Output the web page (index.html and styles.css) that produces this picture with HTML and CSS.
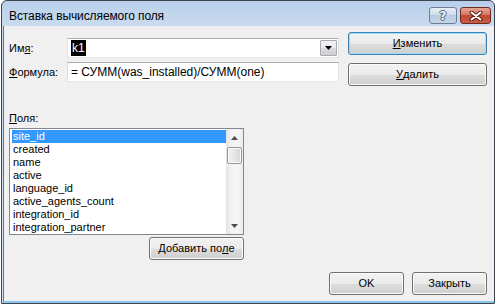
FILE: index.html
```html
<!DOCTYPE html>
<html lang="ru">
<head>
<meta charset="utf-8">
<title>Вставка вычисляемого поля</title>
<link rel="stylesheet" href="styles.css">
</head>
<body>
<div class="window">
  <div class="titlebar">
    <span class="title">Вставка вычисляемого поля</span>
    <div class="caption-btns">
      <div class="cap help"><span class="q">?</span></div>
      <div class="cap close">
        <svg width="14" height="10" viewBox="0 0 14 10">
          <path d="M2.5 1.5 L11.5 8.5 M11.5 1.5 L2.5 8.5" stroke="#5a1c12" stroke-width="4" stroke-linecap="round" fill="none"/>
          <path d="M2.5 1.5 L11.5 8.5 M11.5 1.5 L2.5 8.5" stroke="#ffffff" stroke-width="2" stroke-linecap="round" fill="none"/>
        </svg>
      </div>
    </div>
  </div>
  <div class="client">
    <div class="top">
      <div class="fields">
        <div class="row">
          <span class="lbl">Им<u>я</u>:</span>
          <div class="combo">
            <span class="combo-text"><span class="sel">k1</span></span>
            <div class="drop">
              <svg width="7" height="4" viewBox="0 0 7 4"><path d="M0 0 H7 L3.5 4 Z" fill="#000"/></svg>
            </div>
          </div>
        </div>
        <div class="row">
          <span class="lbl"><u>Ф</u>ормула:</span>
          <div class="input">= СУММ(was_installed)/СУММ(one)</div>
        </div>
      </div>
      <div class="actions">
        <div class="btn default"><u>И</u>зменить</div>
        <div class="btn"><u>У</u>далить</div>
      </div>
    </div>
    <div class="fields-label"><u>П</u>оля:</div>
    <div class="listbox">
      <ul class="items">
        <li class="item selected">site_id</li>
        <li class="item">created</li>
        <li class="item">name</li>
        <li class="item">active</li>
        <li class="item">language_id</li>
        <li class="item">active_agents_count</li>
        <li class="item">integration_id</li>
        <li class="item">integration_partner</li>
      </ul>
      <div class="scrollbar">
        <div class="sb-arrow">
          <svg width="7" height="4" viewBox="0 0 7 4"><path d="M0 4 H7 L3.5 0 Z" fill="#4d4d4d"/></svg>
        </div>
        <div class="sb-track">
          <div class="sb-thumb"></div>
        </div>
        <div class="sb-arrow">
          <svg width="7" height="4" viewBox="0 0 7 4"><path d="M0 0 H7 L3.5 4 Z" fill="#4d4d4d"/></svg>
        </div>
      </div>
    </div>
    <div class="add-row">
      <div class="btn add">Добавить по<u>л</u>е</div>
    </div>
    <div class="footer">
      <div class="btn small">OK</div>
      <div class="btn small">Закрыть</div>
    </div>
  </div>
</div>
</body>
</html>
```

FILE: styles.css
```css
* { box-sizing: border-box; }

html, body {
  margin: 0;
  padding: 0;
  background: #ffffff;
}

body {
  width: 498px;
  height: 306px;
  font-family: "Liberation Sans", Arial, sans-serif;
  font-size: 11px;
  color: #000;
}

u { text-decoration: underline; text-underline-offset: 1px; }

.window {
  margin-left: 1px;
  width: 494px;
  height: 304px;
  border: 1px solid #3c4450;
  border-radius: 6px 6px 0 0;
  background: linear-gradient(to bottom, #b8cfea 0px, #cbdcf0 26px, #dbe7f4 100%);
  padding-left: 1px;
  display: flex;
  flex-direction: column;
}

.titlebar {
  height: 25px;
  display: flex;
  align-items: flex-start;
  justify-content: space-between;
  padding: 0 3px 0 6px;
}

.title {
  font-size: 12px;
  line-height: 14px;
  margin-top: 8px;
  color: #000;
  letter-spacing: -0.1px;
}

.caption-btns {
  display: flex;
  gap: 3px;
  margin-top: 6px;
}

.cap {
  height: 17px;
  border-radius: 3px;
  display: flex;
  align-items: center;
  justify-content: center;
}

.help {
  width: 28px;
  border: 1px solid #6d7f96;
  background: linear-gradient(to bottom, #e6eef7 0%, #d2deeb 45%, #b9cbdf 50%, #c6d6e8 100%);
}

.q {
  font-family: "DejaVu Sans", sans-serif;
  font-weight: bold;
  font-size: 12px;
  line-height: 12px;
  color: #f4f7fb;
  text-shadow: 1px 0 0 #4f5f73, -1px 0 0 #4f5f73, 0 1px 0 #4f5f73, 0 -1px 0 #4f5f73;
}

.close {
  width: 31px;
  border: 1px solid #6e2a1f;
  background: linear-gradient(to bottom, #e6a595 0%, #d67763 45%, #c24a34 50%, #c95c42 100%);
}

.client {
  flex: 1;
  background: #f0f0f0;
  border-left: 1px solid #6f6f6f;
  border-bottom: 2px solid #8cc5ec;
  padding: 6px 7px 0 5px;
  display: flex;
  flex-direction: column;
}

.top {
  display: flex;
  gap: 9px;
}

.fields {
  width: 330px;
  margin-top: 6px;
  display: flex;
  flex-direction: column;
  gap: 4px;
}

.row {
  display: flex;
  align-items: center;
  height: 20px;
}

.lbl {
  width: 58px;
  line-height: 13px;
}

.combo, .input {
  width: 272px;
  height: 20px;
  background: #fff;
  border: 1px solid #abadb3;
  border-left-color: #dbdfe6;
  border-right-color: #dbdfe6;
  border-bottom-color: #e3e9ef;
}

.combo {
  display: flex;
  align-items: stretch;
  justify-content: space-between;
  padding: 1px;
}

.combo-text {
  display: flex;
  align-items: center;
  padding-left: 2px;
}

.sel {
  background: #000;
  color: #fff;
  line-height: 16px;
  font-size: 12px;
  padding: 0 1px;
}

.drop {
  width: 17px;
  border: 1px solid #a8abb3;
  border-radius: 1px;
  background: linear-gradient(to bottom, #f2f2f2 0%, #ebebeb 50%, #dddddd 51%, #cfcfcf 100%);
  display: flex;
  align-items: center;
  justify-content: center;
}

.input {
  padding-left: 3px;
  line-height: 18px;
  font-size: 12px;
  white-space: nowrap;
}

.actions {
  width: 139px;
  display: flex;
  flex-direction: column;
  gap: 8px;
}

.btn {
  height: 23px;
  border: 1px solid #707070;
  border-radius: 3px;
  background: linear-gradient(to bottom, #f2f2f2 0%, #ebebeb 50%, #dddddd 51%, #cfcfcf 100%);
  box-shadow: inset 0 0 0 1px #fcfcfc;
  display: flex;
  align-items: center;
  justify-content: center;
  line-height: 13px;
  white-space: nowrap;
}

.btn.default {
  border-color: #3c7fb1;
  box-shadow: inset 0 0 0 1px #98e0f7;
}

.fields-label {
  margin-top: 26px;
  line-height: 13px;
  height: 13px;
}

.listbox {
  margin-top: 3px;
  width: 235px;
  height: 107px;
  border: 1px solid #828790;
  background: #fff;
  display: flex;
}

.items {
  list-style: none;
  margin: 0;
  padding: 1px 0 0 2px;
  flex: 1;
}

.item {
  height: 13px;
  line-height: 13px;
  padding-left: 1px;
  white-space: nowrap;
}

.item.selected {
  background: #3399ff;
  color: #fff;
}

.scrollbar {
  width: 17px;
  display: flex;
  flex-direction: column;
  background: linear-gradient(to right, #e3e3e3 0%, #f3f3f3 30%, #f5f5f5 70%, #ececec 100%);
}

.sb-arrow {
  height: 17px;
  display: flex;
  align-items: center;
  justify-content: center;
}

.sb-track {
  flex: 1;
  padding-top: 1px;
}

.sb-thumb {
  margin: 0 1px;
  height: 17px;
  border: 1px solid #979797;
  border-radius: 2px;
  background: linear-gradient(to right, #f1f1f1 0%, #e6e6e6 50%, #d6d6d6 100%);
  box-shadow: inset 0 0 0 1px #fafafa;
}

.add-row {
  width: 235px;
  margin-top: 2px;
  display: flex;
  justify-content: flex-end;
}

.btn.add {
  width: 95px;
}

.footer {
  margin-top: 12px;
  display: flex;
  justify-content: flex-end;
  gap: 8px;
}

.btn.small {
  width: 75px;
}
```
